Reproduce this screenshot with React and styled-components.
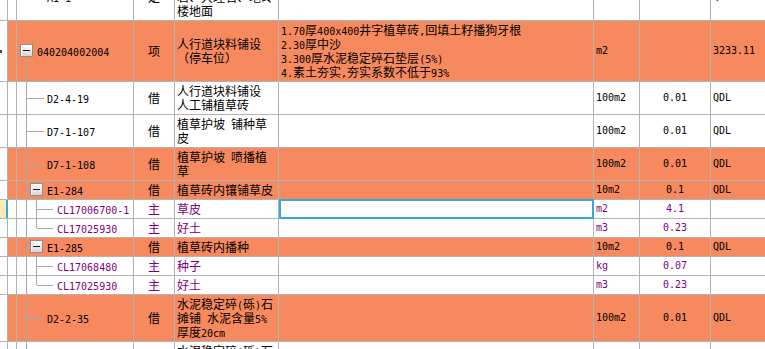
import React from 'react';
import styled, { createGlobalStyle } from 'styled-components';

const GRID = '#b3b3b3';
const TREE = '#a8a8a8';
const ORANGE = '#f7895f';
const PURPLE = '#800080';
const BLUE = '#38a7db';

const Global = createGlobalStyle`
  *, *::before, *::after { box-sizing: border-box; }
  html, body { margin: 0; padding: 0; background: #fff; overflow: hidden; }
  body { font-family: "Noto Sans CJK SC", sans-serif; font-size: 12px; }
`;

const Sheet = styled.div`
  width: 765px;
  height: 349px;
  overflow: hidden;
`;

const Body = styled.div`
  display: flex;
  flex-direction: column;
  margin-top: -26px;
`;

const Row = styled.div`
  display: grid;
  grid-template-columns: 8px 9px 117px 41px 104px 315px 46px 71px 1fr;
  background: ${p => (p.$hl ? ORANGE : '#fff')};
  border-bottom: 1px solid ${GRID};
  color: ${p => (p.$mat ? PURPLE : '#000')};
  line-height: 14px;
`;

const Cell = styled.div`
  position: relative;
  display: flex;
  flex-direction: column;
  justify-content: center;
  align-items: ${p => (p.$center ? 'center' : 'flex-start')};
  padding: 2px;
  border-right: ${p => (p.$last ? 'none' : `1px solid ${GRID}`)};
  white-space: nowrap;
  min-width: 0;

  ${p =>
    p.$sel &&
    `&::after {
      content: '';
      position: absolute;
      left: 0;
      right: -1px;
      top: -1px;
      bottom: -1px;
      border: 2px solid ${BLUE};
    }`}
`;

const RowHead = styled.div`
  position: relative;
  display: flex;
  flex-direction: column;
  justify-content: center;
  background: ${p => (p.$sel ? '#fde9b7' : '#fff')};
  border-right: ${p => (p.$sel ? `2px solid ${BLUE}` : `1px solid ${GRID}`)};
`;

const Marker = styled.span`
  display: block;
  width: 2px;
  height: 3px;
  background: #444;
`;

const TreeCell = styled.div`
  position: relative;
  display: flex;
  align-items: center;
  border-right: 1px solid ${GRID};
  white-space: nowrap;
`;

const Code = styled.span`
  margin-left: ${p => p.$indent}px;
`;

const VLine = styled.span`
  position: absolute;
  left: ${p => p.$x}px;
  width: 1px;
  top: ${p => p.$top};
  bottom: ${p => p.$bottom};
  background: ${TREE};
`;

const HLine = styled.span`
  position: absolute;
  left: ${p => p.$x}px;
  width: ${p => p.$w}px;
  top: 50%;
  height: 1px;
  background: ${TREE};
`;

const Toggle = styled.span`
  position: absolute;
  left: ${p => p.$x}px;
  top: 50%;
  width: 13px;
  height: 13px;
  margin-top: -7px;
  border: 1px solid #8e8e8e;
  background: linear-gradient(#fefefe, #d6d6d6);
  box-shadow: inset 1px 1px 0 #fff;

  &::before {
    content: '';
    position: absolute;
    left: 2px;
    right: 2px;
    top: 5px;
    height: 1px;
    background: #1a1a1a;
  }
`;

const Lat = styled.span`
  font-family: "DejaVu Sans Mono", "Liberation Mono", monospace;
  font-size: 10px;
  line-height: 8px;
`;

const Line = styled.div``;

const mix = s =>
  s
    .split(/([\x00-\x7F]+)/)
    .filter(Boolean)
    .map((part, i) =>
      /^[\x00-\x7F]+$/.test(part) ? (
        <Lat key={i}>{part}</Lat>
      ) : (
        <React.Fragment key={i}>{part}</React.Fragment>
      )
    );

const Lines = ({ lines }) => lines.map((l, i) => <Line key={i}>{mix(l)}</Line>);

const Tree = ({ kind }) => {
  switch (kind) {
    case 'root':
      return (
        <>
          <Toggle $x={3} />
          <VLine $x={9} $top="calc(50% + 7px)" $bottom="-1px" />
        </>
      );
    case 'leaf1':
      return (
        <>
          <VLine $x={9} $top="0" $bottom="-1px" />
          <HLine $x={10} $w={17} />
        </>
      );
    case 'parent2':
      return (
        <>
          <VLine $x={9} $top="0" $bottom="-1px" />
          <HLine $x={10} $w={3} />
          <Toggle $x={13} />
          <VLine $x={19} $top="calc(50% + 7px)" $bottom="-1px" />
        </>
      );
    case 'leaf2':
      return (
        <>
          <VLine $x={9} $top="0" $bottom="-1px" />
          <VLine $x={19} $top="0" $bottom="-1px" />
          <HLine $x={20} $w={16} />
        </>
      );
    case 'leaf2last':
      return (
        <>
          <VLine $x={9} $top="0" $bottom="-1px" />
          <VLine $x={19} $top="0" $bottom="50%" />
          <HLine $x={20} $w={16} />
        </>
      );
    default:
      return null;
  }
};

const rows = [
  { tree: 'none', indent: 30, code: 'A1-1', type: '定', name: ['块料面层 花岗', '岩、大理石、地砖', '楼地面'], desc: [], unit: '100m2', qty: '0.01', src: 'QDL' },
  {
    hl: true, marker: true, tree: 'root', indent: 20, code: '040204002004', type: '项',
    name: ['人行道块料铺设', '（停车位）'],
    desc: ['1.70厚400x400井字植草砖,回填土籽播狗牙根', '2.30厚中沙', '3.300厚水泥稳定碎石垫层(5%)', '4.素土夯实,夯实系数不低于93%'],
    unit: 'm2', qty: '', src: '3233.11',
  },
  { tree: 'leaf1', indent: 30, code: 'D2-4-19', type: '借', name: ['人行道块料铺设', '人工铺植草砖'], desc: [], unit: '100m2', qty: '0.01', src: 'QDL' },
  { tree: 'leaf1', indent: 30, code: 'D7-1-107', type: '借', name: ['植草护坡 铺种草', '皮'], desc: [], unit: '100m2', qty: '0.01', src: 'QDL' },
  { hl: true, tree: 'leaf1', indent: 30, code: 'D7-1-108', type: '借', name: ['植草护坡 喷播植', '草'], desc: [], unit: '100m2', qty: '0.01', src: 'QDL' },
  { hl: true, tree: 'parent2', indent: 30, code: 'E1-284', type: '借', name: ['植草砖内镶铺草皮'], desc: [], unit: '10m2', qty: '0.1', src: 'QDL' },
  { mat: true, sel: true, tree: 'leaf2', indent: 40, code: 'CL17006700-1', type: '主', name: ['草皮'], desc: [], unit: 'm2', qty: '4.1', src: '' },
  { mat: true, tree: 'leaf2last', indent: 40, code: 'CL17025930', type: '主', name: ['好土'], desc: [], unit: 'm3', qty: '0.23', src: '' },
  { hl: true, tree: 'parent2', indent: 30, code: 'E1-285', type: '借', name: ['植草砖内播种'], desc: [], unit: '10m2', qty: '0.1', src: 'QDL' },
  { mat: true, tree: 'leaf2', indent: 40, code: 'CL17068480', type: '主', name: ['种子'], desc: [], unit: 'kg', qty: '0.07', src: '' },
  { mat: true, tree: 'leaf2last', indent: 40, code: 'CL17025930', type: '主', name: ['好土'], desc: [], unit: 'm3', qty: '0.23', src: '' },
  { hl: true, tree: 'leaf1', indent: 30, code: 'D2-2-35', type: '借', name: ['水泥稳定碎(砾)石', '摊铺 水泥含量5%', '厚度20cm'], desc: [], unit: '100m2', qty: '0.01', src: 'QDL' },
  { tree: 'leaf1', indent: 30, code: 'D2-2-36', type: '借', name: ['水泥稳定碎(砾)石', '摊铺 水泥含量5%', '每增减1cm'], desc: [], unit: '100m2', qty: '0.01', src: 'QDL' },
];

export default function App() {
  return (
    <Sheet>
      <Global />
      <Body>
        {rows.map((r, i) => (
          <Row key={i} $hl={r.hl} $mat={r.mat}>
            <RowHead $sel={r.sel}>{r.marker && <Marker />}</RowHead>
            <Cell />
            <TreeCell>
              <Tree kind={r.tree} />
              <Code $indent={r.indent}>{mix(r.code)}</Code>
            </TreeCell>
            <Cell $center>{r.type}</Cell>
            <Cell>
              <Lines lines={r.name} />
            </Cell>
            <Cell $sel={r.sel}>
              <Lines lines={r.desc} />
            </Cell>
            <Cell>{mix(r.unit)}</Cell>
            <Cell $center>{mix(r.qty)}</Cell>
            <Cell $last>{mix(r.src)}</Cell>
          </Row>
        ))}
      </Body>
    </Sheet>
  );
}
